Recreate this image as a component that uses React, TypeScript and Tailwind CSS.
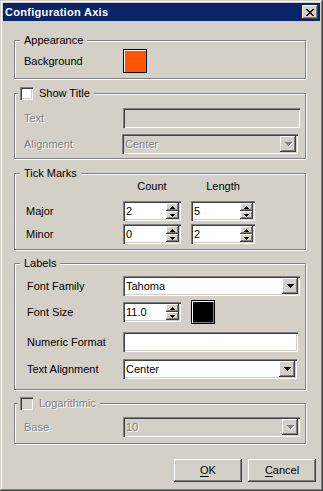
import React from "react";

const sunken =
  "shadow-[inset_1px_1px_0_#808080,inset_2px_2px_0_#404040,inset_-1px_-1px_0_#ffffff,inset_-2px_-2px_0_#d4d0c8]";
const raised =
  "shadow-[inset_-1px_-1px_0_#404040,inset_1px_1px_0_#ffffff,inset_-2px_-2px_0_#808080]";
const disabledText = "text-[#808080] [text-shadow:1px_1px_0_#ffffff]";

function DownArrow({ disabled }: { disabled?: boolean }) {
  const rows = (dx: number, dy: number, fill: string) => (
    <g fill={fill}>
      <rect x={0 + dx} y={0 + dy} width={7} height={1} />
      <rect x={1 + dx} y={1 + dy} width={5} height={1} />
      <rect x={2 + dx} y={2 + dy} width={3} height={1} />
      <rect x={3 + dx} y={3 + dy} width={1} height={1} />
    </g>
  );
  return (
    <svg width="8" height="5" viewBox="0 0 8 5" shapeRendering="crispEdges">
      {disabled ? (
        <>
          {rows(1, 1, "#ffffff")}
          {rows(0, 0, "#808080")}
        </>
      ) : (
        rows(0, 0, "#000000")
      )}
    </svg>
  );
}

function SmallArrow({ up }: { up?: boolean }) {
  return (
    <svg width="5" height="3" viewBox="0 0 5 3" shapeRendering="crispEdges">
      {up ? (
        <g fill="#000">
          <rect x={2} y={0} width={1} height={1} />
          <rect x={1} y={1} width={3} height={1} />
          <rect x={0} y={2} width={5} height={1} />
        </g>
      ) : (
        <g fill="#000">
          <rect x={0} y={0} width={5} height={1} />
          <rect x={1} y={1} width={3} height={1} />
          <rect x={2} y={2} width={1} height={1} />
        </g>
      )}
    </svg>
  );
}

function Checkbox({ disabled }: { disabled?: boolean }) {
  return (
    <div
      className={`w-[13px] h-[13px] shrink-0 ${sunken} ${
        disabled ? "bg-[#d4d0c8]" : "bg-white"
      }`}
    />
  );
}

function Group({
  title,
  check,
  disabled,
  className,
  children,
}: {
  title: string;
  check?: boolean;
  disabled?: boolean;
  className: string;
  children: React.ReactNode;
}) {
  return (
    <div
      className={`relative border border-[#808080] shadow-[inset_1px_1px_0_#ffffff,1px_1px_0_#ffffff] ${className}`}
    >
      {check ? (
        <div className="absolute top-[-7px] left-[3px] h-[13px] bg-[#d4d0c8] px-[2px] flex items-center gap-[6px]">
          <Checkbox disabled={disabled} />
          <span className={`pr-[2px] ${disabled ? disabledText : ""}`}>{title}</span>
        </div>
      ) : (
        <div className="absolute top-[-7px] left-[5px] h-[13px] bg-[#d4d0c8] px-[4px]">
          {title}
        </div>
      )}
      {children}
    </div>
  );
}

function Combo({
  value,
  width,
  disabled,
}: {
  value: string;
  width: string;
  disabled?: boolean;
}) {
  return (
    <div
      className={`h-[20px] p-[2px] flex ${sunken} ${width} ${
        disabled ? "bg-[#d4d0c8]" : "bg-white"
      }`}
    >
      <div className={`flex-1 flex items-center pl-[1px] ${disabled ? disabledText : ""}`}>
        {value}
      </div>
      <div
        className={`w-[16px] h-[16px] bg-[#d4d0c8] flex items-center justify-center pl-[1px] ${raised}`}
      >
        <DownArrow disabled={disabled} />
      </div>
    </div>
  );
}

function TextBox({ width, disabled }: { width: string; disabled?: boolean }) {
  return (
    <div
      className={`h-[20px] ${sunken} ${width} ${disabled ? "bg-[#d4d0c8]" : "bg-white"}`}
    />
  );
}

function Spin({ value, width }: { value: string; width: string }) {
  return (
    <div className={`h-[20px] p-[2px] flex bg-white ${sunken} ${width}`}>
      <div className="flex-1 flex items-center pl-[1px]">{value}</div>
      <div className="w-[13px] flex flex-col">
        <div
          className={`h-[8px] bg-[#d4d0c8] flex items-center justify-center ${raised}`}
        >
          <SmallArrow up />
        </div>
        <div
          className={`h-[8px] bg-[#d4d0c8] flex items-center justify-center ${raised}`}
        >
          <SmallArrow />
        </div>
      </div>
    </div>
  );
}

function Swatch({ color }: { color: string }) {
  return (
    <div className="w-[24px] h-[24px] bg-black p-[1px] shrink-0">
      <div
        className={`w-full h-full ${color} shadow-[inset_1px_1px_0_#ffffff,inset_-1px_-1px_0_#808080]`}
      />
    </div>
  );
}

function Button({ children }: { children: React.ReactNode }) {
  return (
    <div
      className={`w-[68px] h-[23px] bg-[#d4d0c8] flex items-center justify-center ${raised}`}
    >
      {children}
    </div>
  );
}

export default function App() {
  return (
    <div className="w-[323px] h-[491px] bg-[#d4d0c8] p-[3px] flex flex-col font-['Liberation_Sans',Arial,sans-serif] text-[11px] leading-[13px] text-black shadow-[inset_-1px_-1px_0_#404040,inset_1px_1px_0_#d4d0c8,inset_-2px_-2px_0_#808080,inset_2px_2px_0_#ffffff]">
      {/* Title bar */}
      <div className="h-[18px] bg-[#0a246a] flex items-center justify-between pl-[2px] pr-[2px]">
        <span className="text-white font-bold tracking-[0.3px]">Configuration Axis</span>
        <div
          className={`w-[16px] h-[14px] bg-[#d4d0c8] flex items-center justify-center ${raised}`}
        >
          <svg width="8" height="7" viewBox="0 0 8 7" shapeRendering="crispEdges">
            <g fill="#000">
              <rect x={0} y={0} width={2} height={1} />
              <rect x={6} y={0} width={2} height={1} />
              <rect x={1} y={1} width={2} height={1} />
              <rect x={5} y={1} width={2} height={1} />
              <rect x={2} y={2} width={4} height={1} />
              <rect x={3} y={3} width={2} height={1} />
              <rect x={2} y={4} width={4} height={1} />
              <rect x={1} y={5} width={2} height={1} />
              <rect x={5} y={5} width={2} height={1} />
              <rect x={0} y={6} width={2} height={1} />
              <rect x={6} y={6} width={2} height={1} />
            </g>
          </svg>
        </div>
      </div>

      <div className="ml-[11px] w-[292px] flex flex-col">
        {/* Appearance */}
        <Group title="Appearance" className="mt-[19px] h-[39px] pt-[8px] pl-[9px]">
          <div className="flex items-center h-[24px]">
            <div className="w-[99px]">Background</div>
            <Swatch color="bg-[#ff5500]" />
          </div>
        </Group>

        {/* Show Title */}
        <Group title="Show Title" check className="mt-[14px] h-[66px] pt-[14px] pl-[9px]">
          <div className="flex items-center h-[20px]">
            <div className={`w-[99px] ${disabledText}`}>Text</div>
            <TextBox width="w-[177px]" disabled />
          </div>
          <div className="flex items-center h-[20px] mt-[6px]">
            <div className={`w-[99px] -ml-[1px] pl-[1px] ${disabledText}`}>Alignment</div>
            <Combo value="Center" width="w-[176px]" disabled />
          </div>
        </Group>

        {/* Tick Marks */}
        <Group title="Tick Marks" className="mt-[14px] h-[77px] pt-[6px] pl-[11px]">
          <div className="flex h-[13px]">
            <div className="w-[97px]" />
            <div className="w-[58px] text-center">Count</div>
            <div className="w-[10px]" />
            <div className="w-[64px] text-center">Length</div>
          </div>
          <div className="flex items-center h-[20px] mt-[8px]">
            <div className="w-[97px]">Major</div>
            <Spin value="2" width="w-[58px]" />
            <div className="w-[10px]" />
            <Spin value="5" width="w-[64px]" />
          </div>
          <div className="flex items-center h-[20px] mt-[3px]">
            <div className="w-[97px]">Minor</div>
            <Spin value="0" width="w-[58px]" />
            <div className="w-[10px]" />
            <Spin value="2" width="w-[64px]" />
          </div>
        </Group>

        {/* Labels */}
        <Group title="Labels" className="mt-[13px] h-[127px] pt-[12px] pl-[12px]">
          <div className="flex items-center h-[20px]">
            <div className="w-[96px]">Font Family</div>
            <Combo value="Tahoma" width="w-[177px]" />
          </div>
          <div className="flex items-center h-[24px] mt-[4px]">
            <div className="w-[96px]">Font Size</div>
            <Spin value="11.0" width="w-[58px]" />
            <div className="w-[10px]" />
            <Swatch color="bg-black" />
          </div>
          <div className="flex items-center h-[20px] mt-[8px]">
            <div className="w-[96px]">Numeric Format</div>
            <TextBox width="w-[175px]" />
          </div>
          <div className="flex items-center h-[20px] mt-[7px]">
            <div className="w-[96px]">Text Alignment</div>
            <Combo value="Center" width="w-[174px]" />
          </div>
        </Group>

        {/* Logarithmic */}
        <Group
          title="Logarithmic"
          check
          disabled
          className="mt-[13px] h-[41px] pt-[13px] pl-[9px]"
        >
          <div className="flex items-center h-[20px]">
            <div className={`w-[99px] ${disabledText}`}>Base</div>
            <Combo value="10" width="w-[177px]" disabled />
          </div>
        </Group>
      </div>

      <div className="mt-[15px] mr-[4px] flex justify-end gap-[6px]">
        <Button>
          <span>
            <span className="underline underline-offset-[2px]">O</span>K
          </span>
        </Button>
        <Button>
          <span>
            <span className="underline underline-offset-[2px]">C</span>ancel
          </span>
        </Button>
      </div>
    </div>
  );
}
